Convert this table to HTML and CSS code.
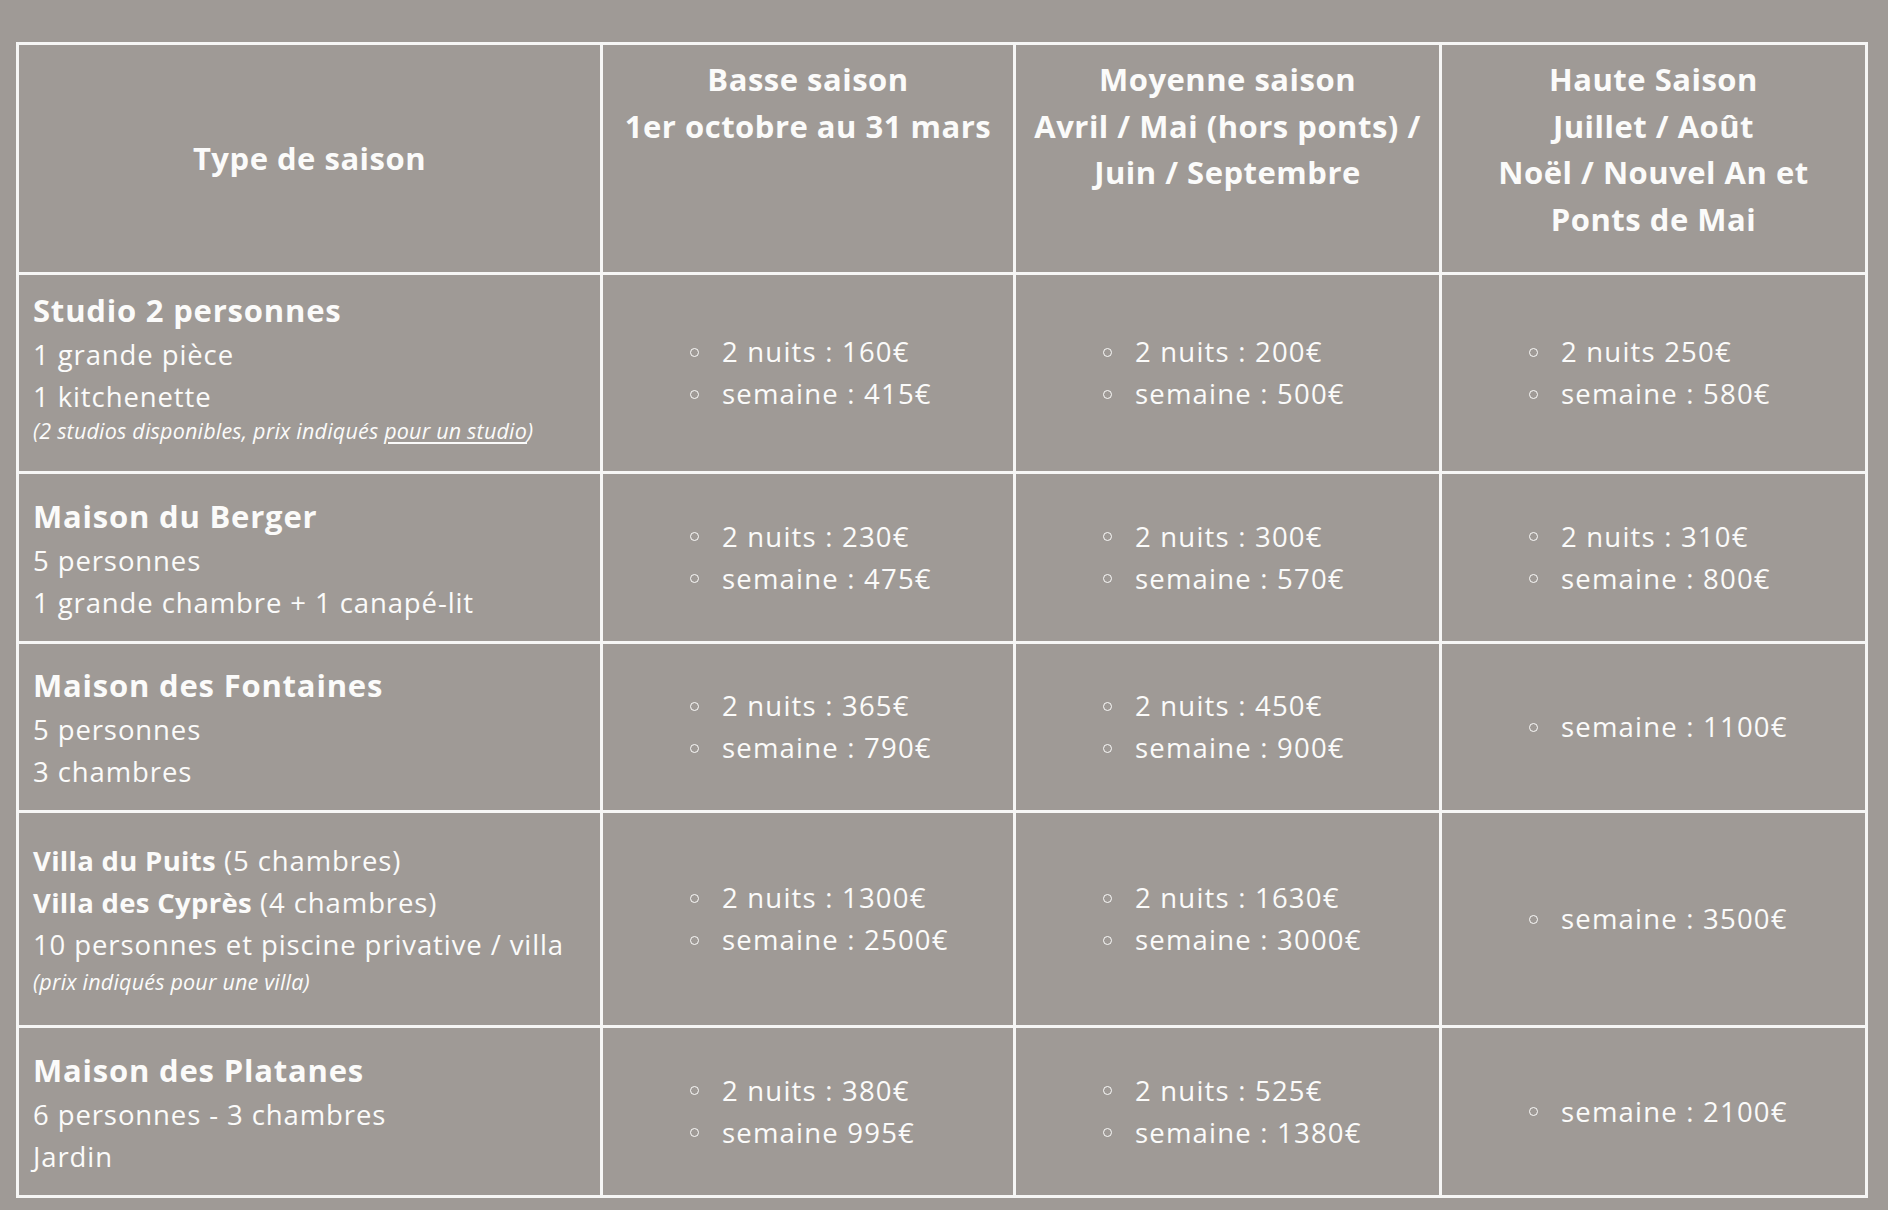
FILE: index.html
```html
<!DOCTYPE html>
<html lang="fr">
<head>
<meta charset="utf-8">
<title>Tarifs</title>
<link rel="stylesheet" href="styles.css">
</head>
<body>
<main class="page">
  <table class="tarifs">
    <colgroup>
      <col class="c-type">
      <col class="c-basse">
      <col class="c-moy">
      <col class="c-haute">
    </colgroup>
    <thead>
      <tr class="r-head">
        <th class="th-type">Type de saison</th>
        <th>Basse saison<br>1er octobre au 31 mars</th>
        <th>Moyenne saison<br>Avril / Mai (hors ponts) /<br>Juin / Septembre</th>
        <th>Haute Saison<br>Juillet / Août<br>Noël / Nouvel An et<br>Ponts de Mai</th>
      </tr>
    </thead>
    <tbody>
      <tr class="r-studio">
        <td class="desc">
          <div class="title">Studio 2 personnes</div>
          <div class="line">1 grande pièce</div>
          <div class="line">1 kitchenette</div>
          <div class="note note-studio">(2 studios disponibles, prix indiqués <span class="u">pour un studio</span>)</div>
        </td>
        <td class="prices"><ul><li>2 nuits : 160€</li><li>semaine : 415€</li></ul></td>
        <td class="prices"><ul><li>2 nuits : 200€</li><li>semaine : 500€</li></ul></td>
        <td class="prices"><ul><li>2 nuits 250€</li><li>semaine : 580€</li></ul></td>
      </tr>
      <tr class="r-berger">
        <td class="desc">
          <div class="title">Maison du Berger</div>
          <div class="line">5 personnes</div>
          <div class="line">1 grande chambre + 1 canapé-lit</div>
        </td>
        <td class="prices"><ul><li>2 nuits : 230€</li><li>semaine : 475€</li></ul></td>
        <td class="prices"><ul><li>2 nuits : 300€</li><li>semaine : 570€</li></ul></td>
        <td class="prices"><ul><li>2 nuits : 310€</li><li>semaine : 800€</li></ul></td>
      </tr>
      <tr class="r-fontaines">
        <td class="desc">
          <div class="title">Maison des Fontaines</div>
          <div class="line">5 personnes</div>
          <div class="line">3 chambres</div>
        </td>
        <td class="prices"><ul><li>2 nuits : 365€</li><li>semaine : 790€</li></ul></td>
        <td class="prices"><ul><li>2 nuits : 450€</li><li>semaine : 900€</li></ul></td>
        <td class="prices"><ul><li>semaine : 1100€</li></ul></td>
      </tr>
      <tr class="r-villa">
        <td class="desc">
          <div class="line"><b>Villa du Puits</b> (5 chambres)</div>
          <div class="line"><b>Villa des Cyprès</b> (4 chambres)</div>
          <div class="line">10 personnes et piscine privative / villa</div>
          <div class="note note-villa">(prix indiqués pour une villa)</div>
        </td>
        <td class="prices"><ul><li>2 nuits : 1300€</li><li>semaine : 2500€</li></ul></td>
        <td class="prices"><ul><li>2 nuits : 1630€</li><li>semaine : 3000€</li></ul></td>
        <td class="prices"><ul><li>semaine : 3500€</li></ul></td>
      </tr>
      <tr class="r-platanes">
        <td class="desc">
          <div class="title">Maison des Platanes</div>
          <div class="line">6 personnes - 3 chambres</div>
          <div class="line">Jardin</div>
        </td>
        <td class="prices"><ul><li>2 nuits : 380€</li><li>semaine 995€</li></ul></td>
        <td class="prices"><ul><li>2 nuits : 525€</li><li>semaine : 1380€</li></ul></td>
        <td class="prices"><ul><li>semaine : 2100€</li></ul></td>
      </tr>
    </tbody>
  </table>
</main>
</body>
</html>
```
FILE: styles.css
```css
html, body {
  margin: 0;
  padding: 0;
  background: #9f9a96;
  height: 100%;
}

body {
  font-family: "Open Sans", Lato, "Noto Sans", sans-serif;
  color: #fbfbfa;
}

.page {
  padding: 42px 0 0 16px;
}

.tarifs {
  border-collapse: collapse;
  table-layout: fixed;
  width: 1850px;
}

.c-type { width: 584px; }
.c-basse { width: 413px; }
.c-moy { width: 426px; }
.c-haute { width: 426px; }

.tarifs th,
.tarifs td {
  border: 3px solid #f6f6f5;
  padding: 0;
}

.tarifs th {
  font-size: 31px;
  font-weight: 700;
  letter-spacing: 0.5px;
  line-height: 46.5px;
  text-align: center;
  vertical-align: top;
  padding-top: 11px;
}

.tarifs th.th-type {
  vertical-align: middle;
  padding-top: 0;
}

.r-head { height: 230px; }
.r-studio { height: 199px; }
.r-berger { height: 170px; }
.r-fontaines { height: 169px; }
.r-villa { height: 215px; }
.r-platanes { height: 170px; }

.tarifs td {
  vertical-align: middle;
}

.desc {
  padding-left: 14px !important;
  font-size: 27.5px;
  letter-spacing: 0.9px;
  line-height: 42px;
}

.desc .title {
  font-size: 31px;
  font-weight: 700;
  letter-spacing: 0.8px;
  line-height: 48px;
}

.desc b {
  font-weight: 700;
  letter-spacing: 0.3px;
}

.desc .note {
  font-size: 21.5px;
  font-style: italic;
  letter-spacing: 0.2px;
  line-height: 26px;
}

.desc .note-studio {
  margin-bottom: 16px;
}

.desc .note-villa {
  line-height: 32px;
}

.u {
  text-decoration: underline;
  text-underline-offset: 3px;
}

.prices ul {
  list-style: none;
  margin: 0;
  padding: 0 0 0 87px;
  font-size: 27.5px;
  letter-spacing: 1.2px;
  line-height: 42px;
}

.prices li {
  display: flex;
  align-items: center;
}

.prices li::before {
  content: "";
  flex: none;
  width: 7px;
  height: 7px;
  border: 1.6px solid #fbfbfa;
  border-radius: 50%;
  margin-right: 23px;
}
```
